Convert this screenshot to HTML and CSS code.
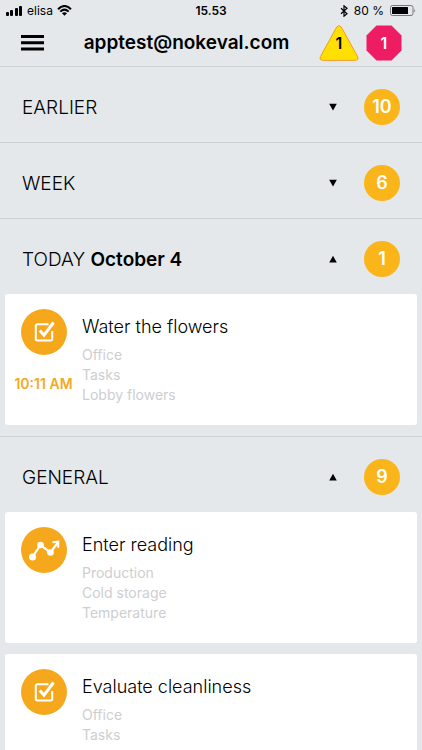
FILE: index.html
```html
<!DOCTYPE html>
<html lang="en">
<head>
    <meta charset="UTF-8">
    <meta name="viewport" content="width=device-width, initial-scale=1.0">
    <title>Tasks</title>
    <link rel="stylesheet" href="styles.css">
</head>
<body>

    <div class="status-bar">
        <div class="status-left">
            <svg width="17" height="10" viewBox="0 0 17 10">
                <rect x="0" y="6" width="3" height="4" rx="1"/>
                <rect x="4" y="4" width="3" height="6" rx="1"/>
                <rect x="9" y="2" width="3" height="8" rx="1"/>
                <rect x="13" y="0" width="3" height="10" rx="1"/>
            </svg>
            <span class="carrier">elisa</span>
            <svg width="15" height="11" viewBox="0 0 15 11" fill="none" stroke="#000" stroke-width="2">
                <path d="M1 4.200Q7.500-2.200 14 4.200"/>
                <path d="M3.300 6.600Q7.500 2.600 11.700 6.600"/>
                <path d="M5 8.300Q7.500 6 10 8.300L7.500 10.800z" fill="#000" stroke="none"/>
            </svg>
        </div>
        <span class="clock">15.53</span>
        <div class="status-right">
            <svg width="8" height="12" viewBox="0 0 8 12" fill="none" stroke="#000" stroke-width="1.200">
                <path d="M1 3.300L7 8.700L4 11.200V.8L7 3.300L1 8.700"/>
            </svg>
            <span>80 %</span>
            <svg width="26" height="11" viewBox="0 0 26 11">
                <rect x=".5" y=".5" width="22.500" height="10" rx="2" fill="none" stroke="#777"/>
                <rect x="2" y="2" width="16" height="7" rx=".5"/>
                <path d="M24.300 3.500Q25.800 5.500 24.300 7.500z" fill="#777"/>
            </svg>
        </div>
    </div>

    <header class="top-bar">
        <button class="menu" aria-label="Menu">
            <svg width="23" height="16" viewBox="0 0 23 16">
                <path d="M0 0h23v3H0zM0 6.300h23v3H0zM0 12.600h23v3H0z"/>
            </svg>
        </button>
        <h1>apptest@nokeval.com</h1>
        <button class="alert warning">
            <svg width="40" height="36" viewBox="0 0 40 36">
                <path d="M17.700 2Q20 -.6 22.300 2L38.500 31.500Q40 35 36.500 35.300H3.500Q0 35 1.500 31.500z" fill="#ffe000" stroke="#f59a23"/>
            </svg>
            <span>1</span>
        </button>
        <button class="alert danger">
            <svg width="36" height="36" viewBox="0 0 36 36">
                <path d="M10.500 .5h15L35.500 10.500v15L25.500 35.500h-15L.5 25.500v-15z" fill="#ee1c62"/>
            </svg>
            <span>1</span>
        </button>
    </header>

    <main>
        <section class="group">
            <button class="group-title">
                <span class="name">EARLIER</span>
                <svg class="arrow" width="8" height="8" viewBox="0 0 8 8"><path d="M.2.800h7.600L4 7.500z"/></svg>
                <span class="count">10</span>
            </button>
        </section>

        <section class="group">
            <button class="group-title">
                <span class="name">WEEK</span>
                <svg class="arrow" width="8" height="8" viewBox="0 0 8 8"><path d="M.2.800h7.600L4 7.500z"/></svg>
                <span class="count">6</span>
            </button>
        </section>

        <section class="group">
            <button class="group-title">
                <span class="name">TODAY <b>October 4</b></span>
                <svg class="arrow" width="8" height="8" viewBox="0 0 8 8"><path d="M.2 7.500h7.600L4 .8z"/></svg>
                <span class="count">1</span>
            </button>
            <article class="card">
                <div class="side">
                    <svg width="46" height="46" viewBox="0 0 46 46" fill="none" stroke="#fff">
                        <circle cx="23" cy="23" r="23" fill="#f6a81c" stroke="none"/>
                        <path d="M27.500 15.300H16.500q-1.700 0-1.700 1.700v12.800q0 1.700 1.700 1.700h13q1.700 0 1.700-1.700V22" stroke-width="2"/>
                        <path d="M18.800 21.500l4.200 4.700L32.500 13.500" stroke-width="3"/>
                    </svg>
                    <time>10:11 AM</time>
                </div>
                <div class="info">
                    <h2>Water the flowers</h2>
                    <p>Office</p>
                    <p>Tasks</p>
                    <p>Lobby flowers</p>
                </div>
            </article>
        </section>

        <section class="group">
            <button class="group-title">
                <span class="name">GENERAL</span>
                <svg class="arrow" width="8" height="8" viewBox="0 0 8 8"><path d="M.2 7.500h7.600L4 .8z"/></svg>
                <span class="count">9</span>
            </button>
            <article class="card">
                <div class="side">
                    <svg width="46" height="46" viewBox="0 0 46 46" fill="none" stroke="#fff">
                        <circle cx="23" cy="23" r="23" fill="#f6a81c" stroke="none"/>
                        <path d="M11.500 30L19.500 18L29.500 25.500L36.500 16" stroke-width="2.200"/>
                        <path d="M31.500 15.300L37.300 14.700L37.200 20.700" stroke-width="2"/>
                        <g fill="#fff" stroke="none">
                            <circle cx="11.500" cy="30" r="3.500"/>
                            <circle cx="19.500" cy="18" r="3.300"/>
                            <circle cx="29.500" cy="25.500" r="3.300"/>
                        </g>
                    </svg>
                </div>
                <div class="info">
                    <h2>Enter reading</h2>
                    <p>Production</p>
                    <p>Cold storage</p>
                    <p>Temperature</p>
                </div>
            </article>
            <article class="card">
                <div class="side">
                    <svg width="46" height="46" viewBox="0 0 46 46" fill="none" stroke="#fff">
                        <circle cx="23" cy="23" r="23" fill="#f6a81c" stroke="none"/>
                        <path d="M27.500 15.300H16.500q-1.700 0-1.700 1.700v12.800q0 1.700 1.700 1.700h13q1.700 0 1.700-1.700V22" stroke-width="2"/>
                        <path d="M18.800 21.500l4.200 4.700L32.500 13.500" stroke-width="3"/>
                    </svg>
                </div>
                <div class="info">
                    <h2>Evaluate cleanliness</h2>
                    <p>Office</p>
                    <p>Tasks</p>
                </div>
            </article>
        </section>
    </main>

</body>
</html>
```
FILE: styles.css
```css
* {
    box-sizing: border-box;
}
body {
    margin: 0;
    height: 100vh;
    display: flex;
    flex-direction: column;
    font-family: Inter, "Liberation Sans", sans-serif;
    background: #e4e8eb;
    color: #000;
}
button {
    padding: 0;
    border: none;
    background: none;
    font: inherit;
    color: inherit;
    cursor: pointer;
}
svg {
    display: block;
    flex: none;
}
.status-bar {
    display: grid;
    grid-template-columns: 1fr auto 1fr;
    align-items: center;
    height: 21px;
    padding: 0 6px;
    font-size: 12px;
}
.status-left, .status-right {
    display: flex;
    align-items: center;
    gap: 4px;
}
.status-right {
    justify-content: flex-end;
    gap: 6px;
}
.clock {
    font-weight: 600;
}
.top-bar {
    display: flex;
    align-items: center;
    height: 46px;
    padding: 0 20px 2px 21px;
    border-bottom: 1px solid #d0d2d7;
}
.top-bar h1 {
    flex: 1;
    margin: 0;
    text-align: center;
    padding-left: 10px;
    font-size: 19px;
    font-weight: 600;
}
.alert {
    display: grid;
    place-items: center;
    font-size: 16px;
    font-weight: 600;
}
.alert svg, .alert span {
    grid-area: 1 / 1;
}
.danger {
    margin-left: 7px;
    color: #fff;
}
main {
    flex: 1;
    min-height: 0;
    overflow-y: auto;
    scrollbar-width: none;
}
.group {
    border-bottom: 1px solid #cdd1d6;
}
.group-title {
    display: flex;
    align-items: center;
    width: 100%;
    height: 75px;
    padding: 4px 22px 0;
    text-align: left;
}
.name {
    flex: 1;
    padding-top: 2px;
    font-size: 19px;
    font-weight: 300;
}
.name b {
    font-weight: 600;
}
.arrow {
    margin-right: 27px;
}
.count {
    display: grid;
    place-items: center;
    width: 36px;
    height: 36px;
    border-radius: 50%;
    background: #fab51a;
    color: #fff;
    font-size: 18px;
    font-weight: 600;
}
.card {
    display: flex;
    min-height: 131px;
    margin: 0 5px 11px;
    padding: 15px 0 0;
    border-radius: 3px;
    background: #fff;
}
.side {
    display: flex;
    flex-direction: column;
    align-items: center;
    gap: 20px;
    width: 77px;
}
.side time {
    color: #f6a81c;
    font-size: 14px;
    font-weight: 600;
}
.info h2 {
    margin: 5px 0;
    font-size: 18px;
    line-height: 26px;
    font-weight: 300;
}
.info p {
    margin: 0;
    color: #cdced1;
    font-size: 14px;
    line-height: 20px;
}
```
